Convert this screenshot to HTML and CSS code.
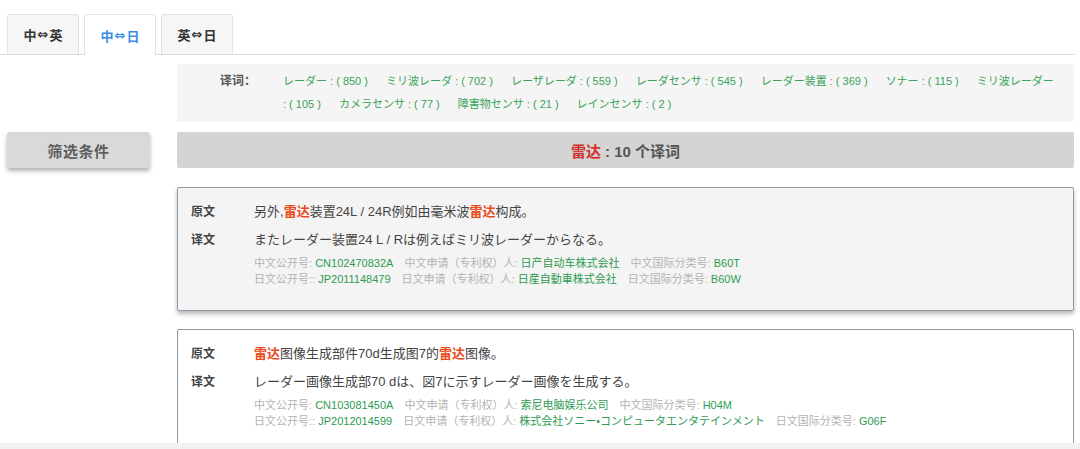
FILE: index.html
```html
<!DOCTYPE html>
<html lang="zh-CN">
<head>
<meta charset="utf-8">
<title>雷达 译词</title>
<link rel="stylesheet" href="styles.css">
</head>
<body>
<div class="tabs">
  <div class="tab">中<span class="arrow">⇔</span>英</div>
  <div class="tab active">中<span class="arrow">⇔</span>日</div>
  <div class="tab">英<span class="arrow">⇔</span>日</div>
</div>
<div class="layout">
  <div class="kw-box">
    <div class="kw-label">译词：</div>
    <div class="kw-list">
      <span class="kw">レーダー :&nbsp;(&nbsp;850&nbsp;)</span><span class="kw">ミリ波レーダ :&nbsp;(&nbsp;702&nbsp;)</span><span class="kw">レーザレーダ :&nbsp;(&nbsp;559&nbsp;)</span><span class="kw">レーダセンサ :&nbsp;(&nbsp;545&nbsp;)</span><span class="kw">レーダー装置 :&nbsp;(&nbsp;369&nbsp;)</span><span class="kw">ソナー :&nbsp;(&nbsp;115&nbsp;)</span><span class="kw">ミリ波レーダー :&nbsp;(&nbsp;105&nbsp;)</span><span class="kw">カメラセンサ :&nbsp;(&nbsp;77&nbsp;)</span><span class="kw">障害物センサ :&nbsp;(&nbsp;21&nbsp;)</span><span class="kw">レインセンサ :&nbsp;(&nbsp;2&nbsp;)</span>
    </div>
  </div>
  <aside class="side">
    <button class="filter-btn">筛选条件</button>
  </aside>
  <main class="results">
    <div class="title-bar"><span class="hl-title">雷达</span> : 10 个译词</div>
    <div class="card card-grey">
      <div class="row"><span class="label">原文</span><span class="text">另外,<span class="hl">雷达</span>装置24L / 24R例如由毫米波<span class="hl">雷达</span>构成。</span></div>
      <div class="row"><span class="label">译文</span><span class="text" lang="ja">またレーダー装置24 L / Rは例えばミリ波レーダーからなる。</span></div>
      <div class="meta">
        <div><span class="mk">中文公开号:</span> <span class="mv">CN102470832A</span><span class="mk">中文申请（专利权）人:</span> <span class="mv">日产自动车株式会社</span><span class="mk">中文国际分类号:</span> <span class="mv">B60T</span></div>
        <div><span class="mk">日文公开号::</span> <span class="mv">JP2011148479</span><span class="mk">日文申请（专利权）人:</span> <span class="mv" lang="ja">日産自動車株式会社</span><span class="mk">日文国际分类号:</span> <span class="mv">B60W</span></div>
      </div>
    </div>
    <div class="card">
      <div class="row"><span class="label">原文</span><span class="text"><span class="hl">雷达</span>图像生成部件70d生成图7的<span class="hl">雷达</span>图像。</span></div>
      <div class="row"><span class="label">译文</span><span class="text" lang="ja">レーダー画像生成部70 dは、図7に示すレーダー画像を生成する。</span></div>
      <div class="meta">
        <div><span class="mk">中文公开号:</span> <span class="mv">CN103081450A</span><span class="mk">中文申请（专利权）人:</span> <span class="mv">索尼电脑娱乐公司</span><span class="mk">中文国际分类号:</span> <span class="mv">H04M</span></div>
        <div><span class="mk">日文公开号::</span> <span class="mv">JP2012014599</span><span class="mk">日文申请（专利权）人:</span> <span class="mv" lang="ja">株式会社ソニー・コンピュータエンタテインメント</span><span class="mk">日文国际分类号:</span> <span class="mv">G06F</span></div>
      </div>
    </div>
  </main>
</div>
<div class="bottom-band"></div>
</body>
</html>
```

FILE: styles.css
```css
html, body {
  margin: 0;
  padding: 0;
  overflow: hidden;
  background: #ffffff;
  font-family: "Liberation Sans", "Noto Sans CJK SC", "Noto Sans CJK JP", sans-serif;
  color: #444;
}

.tabs {
  display: flex;
  gap: 5px;
  margin: 14px 5px 0 0;
  padding-left: 7px;
  border-bottom: 1px solid #dcdcdc;
  height: 40px;
}

.tab {
  width: 72px;
  height: 40px;
  box-sizing: border-box;
  border: 1px solid #e2e2e2;
  border-bottom: none;
  border-radius: 3px 3px 0 0;
  background: #f6f6f6;
  font-size: 13px;
  font-weight: bold;
  color: #333;
  display: flex;
  align-items: center;
  justify-content: center;
}

.arrow {
  font-family: "DejaVu Sans", sans-serif;
  font-size: 13px;
  font-weight: bold;
  margin: 0 1px;
}

.tab.active {
  background: #ffffff;
  color: #3a8ee6;
  height: 41px;
  margin-bottom: -1px;
}

.layout {
  display: grid;
  grid-template-columns: 177px 897px;
  grid-template-rows: auto auto;
  padding-top: 9px;
}

.kw-box {
  grid-column: 2;
  grid-row: 1;
  display: flex;
  background: #f5f5f5;
  border-radius: 2px;
  padding: 6px 12px 6px 0;
  margin-bottom: 10px;
  line-height: 23px;
}

.kw-label {
  flex: 0 0 106px;
  box-sizing: border-box;
  padding-left: 43px;
  font-size: 12px;
  font-weight: bold;
  color: #555;
}

.kw-list {
  flex: 1;
  font-size: 11px;
  color: #3aa35c;
}

.kw {
  margin-right: 18px;
}

.side {
  grid-column: 1;
  grid-row: 2;
  padding-left: 7px;
}

.filter-btn {
  width: 143px;
  height: 36px;
  border: none;
  border-radius: 3px;
  background: #d9d9d9;
  box-shadow: 0 3px 4px rgba(0, 0, 0, 0.3);
  font-family: inherit;
  font-size: 15px;
  font-weight: bold;
  color: #5e5e5e;
  letter-spacing: 0.5px;
}

.results {
  grid-column: 2;
  grid-row: 2;
  display: flex;
  flex-direction: column;
  gap: 18px;
}

.title-bar {
  height: 36px;
  background: #d4d4d4;
  border-radius: 2px;
  display: flex;
  align-items: center;
  justify-content: center;
  font-size: 15px;
  font-weight: bold;
  color: #555;
  white-space: pre;
  margin-bottom: 1px;
}

.hl-title {
  color: #d2302c;
}

.card {
  border: 1px solid #8e9ba6;
  border-radius: 2px;
  background: #ffffff;
  padding: 8px 13px 23px;
}

.card-grey {
  background: #f4f4f4;
  box-shadow: 0 3px 4px rgba(0, 0, 0, 0.28);
}

.row {
  display: flex;
  height: 28px;
  align-items: center;
}

.label {
  flex: 0 0 63px;
  font-size: 12px;
  font-weight: bold;
  color: #444;
}

.text {
  font-size: 13px;
  color: #444;
}

.hl {
  color: #ea4b1e;
  font-weight: bold;
}

.meta {
  padding-left: 63px;
  padding-top: 3px;
  font-size: 11px;
  line-height: 16px;
}

.mk {
  color: #b3b3b3;
}

.mv {
  color: #2e9b52;
  margin-right: 11px;
}

.bottom-band {
  position: fixed;
  left: 0;
  right: 0;
  bottom: 0;
  height: 6px;
  background: #f1f1f1;
}
```
